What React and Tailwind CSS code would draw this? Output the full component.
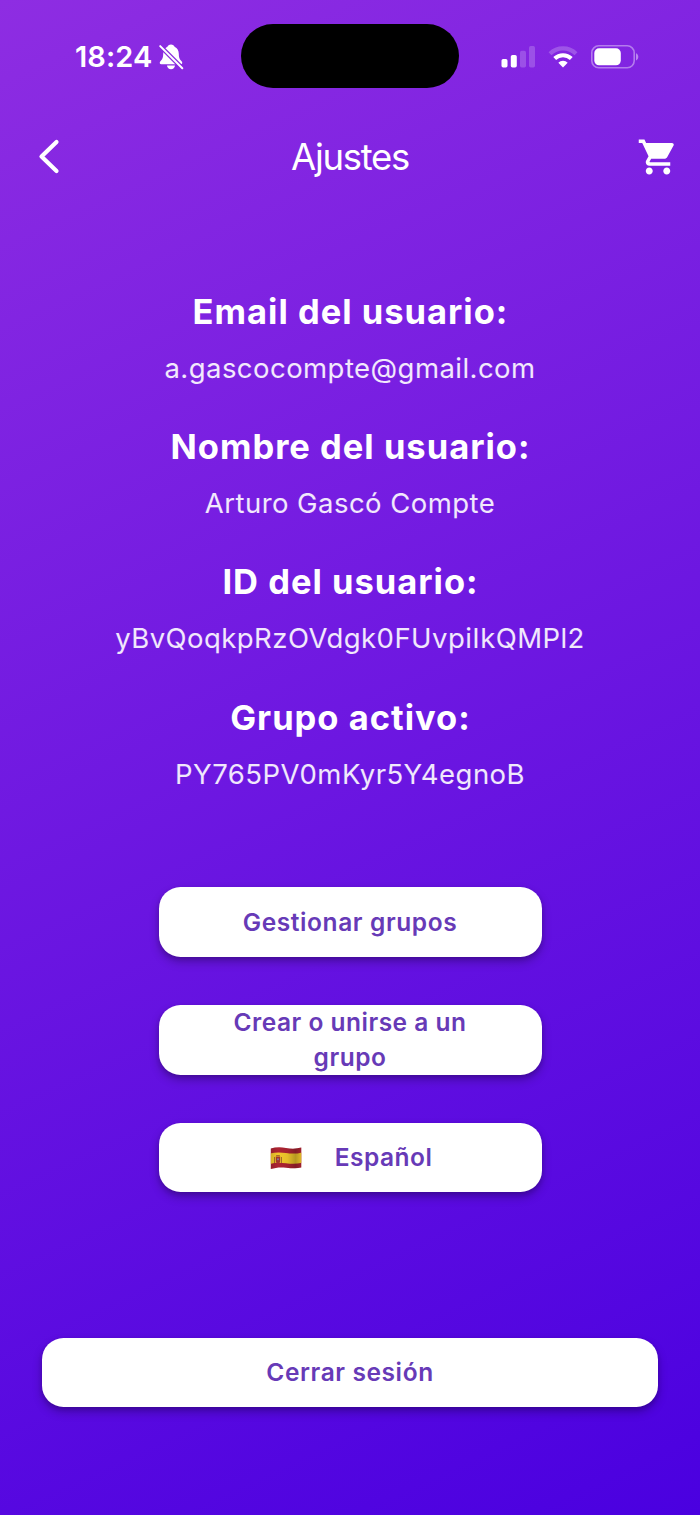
const USER_FIELDS = [
  { label: "Email del usuario:", value: "a.gascocompte@gmail.com" },
  { label: "Nombre del usuario:", value: "Arturo Gascó Compte" },
  { label: "ID del usuario:", value: "yBvQoqkpRzOVdgk0FUvpiIkQMPl2" },
  { label: "Grupo activo:", value: "PY765PV0mKyr5Y4egnoB" },
];

function MutedBell() {
  return (
    <svg viewBox="0 0 26 28" className="w-[26px] h-[28px]" fill="none">
      <path
        d="M13 1.500c-1.900 0-3.200 1-3.600 2.300C6.600 5 5.300 7.500 5.200 10.800c-.1 4.300-.8 5.500-2.800 7.500-1.200 1.300-.7 2.900.8 2.900h19.600c1.500 0 2-1.600.8-2.900-2-2-2.700-3.200-2.800-7.500-.1-3.300-1.400-5.800-4.200-7C16.200 2.500 14.900 1.500 13 1.500Z"
        fill="#fff"
      />
      <path d="M9 22.600h8c-.2 2.200-1.900 3.700-4 3.700s-3.800-1.500-4-3.700Z" fill="#fff" />
      <path d="M0 .9 26 26.900" stroke="#892bdf" strokeWidth="4.500" />
      <path d="M2.200 3.100 24.300 25.200" stroke="#fff" strokeWidth="2" strokeLinecap="round" />
    </svg>
  );
}

function Signal() {
  return (
    <svg viewBox="0 0 34 22" className="w-[34px] h-[22px]" fill="#fff">
      <rect x="0.500" y="13" width="6" height="8.500" rx="1.700" />
      <rect x="9.800" y="9" width="6" height="12.500" rx="1.700" />
      <rect x="19" y="4.700" width="6" height="16.800" rx="1.700" opacity="0.200" />
      <rect x="28" y="0" width="6" height="21.500" rx="1.700" opacity="0.200" />
    </svg>
  );
}

function Wifi() {
  return (
    <svg viewBox="0 0 30 22" className="w-[30px] h-[22px]" fill="none">
      <path d="M2 7.700a18.600 18.600 0 0 1 26 0" stroke="#fff" strokeWidth="4.200" opacity="0.220" />
      <path d="M6.700 12.500a11.900 11.900 0 0 1 16.600 0" stroke="#fff" strokeWidth="4" />
      <path d="M15 21.500 10.300 16.800a6.600 6.600 0 0 1 9.400 0Z" fill="#fff" />
    </svg>
  );
}

function Battery() {
  return (
    <svg viewBox="0 0 48 24" className="w-[48px] h-[24px]" fill="none">
      <rect x="0.800" y="0.800" width="42.400" height="22" rx="7" stroke="#fff" strokeOpacity="0.400" strokeWidth="1.600" />
      <rect x="3.300" y="3.300" width="26.500" height="17" rx="4.800" fill="#fff" />
      <path d="M45 8.200v7.200c1.500-.6 2.300-2 2.300-3.600S46.500 8.800 45 8.200Z" fill="#fff" opacity="0.450" />
    </svg>
  );
}

function SpainFlag() {
  return (
    <svg viewBox="0 0 32 24" className="w-[32px] h-[24px] mt-[1px]">
      <defs>
        <linearGradient id="shade" x1="0" x2="1" y1="0" y2="0">
          <stop offset="0" stopColor="#000" stopOpacity="0.160" />
          <stop offset="0.250" stopColor="#000" stopOpacity="0.020" />
          <stop offset="0.550" stopColor="#000" stopOpacity="0.080" />
          <stop offset="0.800" stopColor="#000" stopOpacity="0.260" />
          <stop offset="1" stopColor="#000" stopOpacity="0.080" />
        </linearGradient>
        <clipPath id="wave">
          <path d="M.8 2.600C5.500 1 10.500.9 16 2s10.500.9 15.300-.4v20C26.500 22.900 21.500 22.300 16 21.700S5.500 21.500.8 23Z" />
        </clipPath>
      </defs>
      <g clipPath="url(#wave)">
        <rect width="32" height="24" fill="#b02433" />
        <path d="M0 7.600c5-1.500 10.500-1.500 16-.6s11 .8 16-.6v10.400c-5 1.300-10.500 1.300-16 .5s-11-.9-16 .7Z" fill="#f7cd2c" />
        <path d="M5.800 10.500h4.400v4.400c0 1.500-1 2.300-2.200 2.300s-2.200-.8-2.200-2.300Z" fill="#a8382c" />
        <path d="M4.500 11v6M11.500 11v6M6.200 9.500h3.600" stroke="#a0682c" strokeWidth="0.900" />
        <circle cx="8" cy="13.300" r="1" fill="#8a7a9c" />
        <rect width="32" height="24" fill="url(#shade)" />
      </g>
    </svg>
  );
}

function Button({ className = "", children }) {
  return (
    <button
      className={`h-[69.500px] shrink-0 rounded-[21.500px] bg-white text-[#673ab7] text-[24.500px] leading-[35px] font-semibold flex items-center justify-center text-center shadow-[0_5px_10px_rgba(0,0,0,0.260),0_2px_4px_rgba(0,0,0,0.120)] ${className}`}
    >
      {children}
    </button>
  );
}

export default function App() {
  return (
    <div className="w-[700px] h-[1515px] overflow-hidden flex flex-col font-['Inter',sans-serif] text-white bg-[linear-gradient(155.200deg,#8e2de2,#4a00e0)]">
      <div className="h-[112px] shrink-0 flex items-center justify-between pl-[75px] pr-[61px]">
        <div className="w-[166px] pt-[2px] flex items-center gap-[5px]">
          <span className="text-[29px] font-semibold tracking-[0.1px]">18:24</span>
          <MutedBell />
        </div>
        <div className="w-[218px] h-[64px] rounded-full bg-black" />
        <div className="w-[180px] pt-[2px] flex items-center justify-end gap-[13px]">
          <Signal />
          <Wifi />
          <Battery />
        </div>
      </div>

      <header className="h-[90px] shrink-0 flex items-center justify-between pl-[38px] pr-[21px]">
        <button className="w-[25px]">
          <svg viewBox="0 0 22 36" className="w-[22px] h-[36px]" fill="none">
            <path d="M18.500 3 3.500 17.500l15 14.500" stroke="#fff" strokeWidth="4.200" strokeLinecap="round" strokeLinejoin="round" />
          </svg>
        </button>
        <h1 className="text-[36.500px] font-normal tracking-[-1.300px]">Ajustes</h1>
        <button className="w-[42px]">
          <svg viewBox="0 0 24 24" className="w-[42px] h-[42px] -mt-[1px]" fill="#fff">
            <path d="M7 18c-1.100 0-1.990.9-1.990 2S5.900 22 7 22s2-.9 2-2-.9-2-2-2zM1 2v2h2l3.600 7.590-1.350 2.450c-.160.280-.250.610-.250.960 0 1.100.9 2 2 2h12v-2H7.420c-.140 0-.250-.110-.250-.250l.030-.120.900-1.630h7.450c.750 0 1.410-.410 1.750-1.030l3.580-6.490c.080-.140.120-.310.120-.480 0-.550-.450-1-1-1H5.210l-.940-2H1zm16 16c-1.100 0-1.990.9-1.990 2s.890 2 1.990 2 2-.9 2-2-.9-2-2-2z" />
          </svg>
        </button>
      </header>

      <main className="flex flex-col items-center pt-[82px]">
        {USER_FIELDS.map((field) => (
          <section key={field.label} className="h-[135.200px] text-center">
            <h2 className="h-[56px] pl-[1px] text-[34.500px] leading-[56px] font-bold tracking-[1px]">{field.label}</h2>
            <p className="h-[57px] text-[27.500px] leading-[57px] font-normal tracking-[0.450px] text-white/90">{field.value}</p>
          </section>
        ))}

        <div className="mt-[62.700px] w-[383px] flex flex-col gap-[48.200px]">
          <Button className="tracking-[0.6px]">Gestionar grupos</Button>
          <Button className="px-[70px] tracking-[0.5px]">Crear o unirse a un grupo</Button>
          <Button className="gap-[33px] pl-[2px] tracking-[0.5px]">
            <SpainFlag />
            <span>Español</span>
          </Button>
        </div>

        <Button className="mt-[145.300px] w-[616px] tracking-[0.6px]">Cerrar sesión</Button>
      </main>
    </div>
  );
}
